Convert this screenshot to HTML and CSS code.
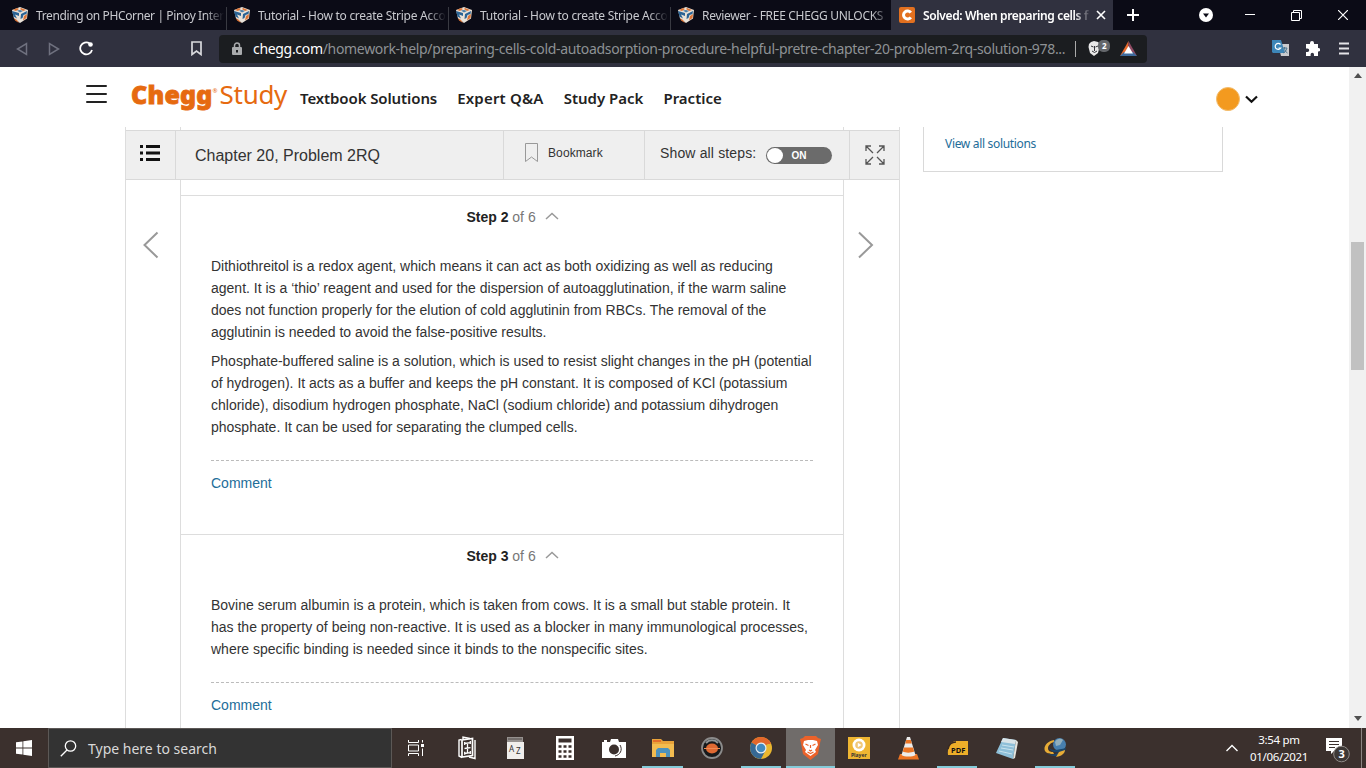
FILE: index.html
```html
<!DOCTYPE html>
<html lang="en">
<head>
    <meta charset="UTF-8">
    <title>Solved: When preparing cells</title>
    <link rel="stylesheet" href="styles.css">
</head>
<body>

<svg width="0" height="0" class="defs">
    <symbol id="cube" viewBox="0 0 16 16">
        <path d="M0 3 8 0l8 3-1 8.500-7 4.500-6-4.500z" fill="#e9e2d8"/>
        <path d="M1 3 5 1l2 1-3 2zM9 1l5 2-3 1-3-2zM12 9l3-2-.5 4-3.500 2.500zM2 11l3 2 2 3-4-2.500z" fill="#dc7436"/>
        <path d="M0 4l7 2v3L3 7.500l2 4-3.500-2zM9 7l6-3-.5 3-3 1-1 3-2 1z" fill="#2a6394"/>
        <path d="M5 3.500 8 3l3 1-3 1.500z" fill="#4b7fa9"/>
    </symbol>
    <symbol id="up" viewBox="0 0 14 8"><path d="M1 7l6-5.500L13 7" fill="none" stroke="#999" stroke-width="1.500"/></symbol>
</svg>

<div class="tabs">
    <div class="tab"><svg class="fav"><use href="#cube"/></svg><span class="t1">Trending on PHCorner | Pinoy Inter</span></div>
    <div class="tab"><svg class="fav"><use href="#cube"/></svg><span class="t2">Tutorial - How to create Stripe Acco</span></div>
    <div class="tab"><svg class="fav"><use href="#cube"/></svg><span class="t2">Tutorial - How to create Stripe Acco</span></div>
    <div class="tab"><svg class="fav"><use href="#cube"/></svg><span class="t3">Reviewer - FREE CHEGG UNLOCKS</span></div>
    <div class="tab active">
        <svg class="fav" viewBox="0 0 16 16"><rect width="16" height="16" rx="2" fill="#e2701f"/><path d="M11.800 5.700A4 4 0 1 0 11.800 10.300" fill="none" stroke="#fff" stroke-width="3"/></svg>
        <span class="t4">Solved: When preparing cells f</span>
        <svg class="close" width="10" height="10" viewBox="0 0 10 10"><path d="M1 1l8 8M9 1L1 9" stroke="#fff" stroke-width="1.600"/></svg>
    </div>
    <svg class="plus" width="12" height="12" viewBox="0 0 12 12"><path d="M6 0v12M0 6h12" stroke="#fff" stroke-width="2"/></svg>
    <div class="winbtns">
        <svg width="14" height="14" viewBox="0 0 14 14"><circle cx="7" cy="7" r="7" fill="#fff"/><path d="M4 5.500h6L7 9.500z" fill="#0b0b16"/></svg>
        <svg width="10" height="10" viewBox="0 0 10 10"><path d="M0 4.500h10" stroke="#fff"/></svg>
        <svg width="11" height="11" viewBox="0 0 11 11"><path d="M.5 2.500h8v8h-8zM2.500 2.500v-2h8v8h-2" fill="none" stroke="#fff"/></svg>
        <svg width="10" height="10" viewBox="0 0 10 10"><path d="M0 0l10 10M10 0L0 10" stroke="#fff" stroke-width="1.200"/></svg>
    </div>
</div>

<div class="toolbar">
    <svg class="back" width="12" height="14" viewBox="0 0 12 14"><path d="M10.500 1.500v11L1.500 7z" fill="none" stroke="#6f717f" stroke-width="1.500"/></svg>
    <svg class="fwd" width="12" height="14" viewBox="0 0 12 14"><path d="M1.500 1.500v11l9-5.500z" fill="none" stroke="#6f717f" stroke-width="1.500"/></svg>
    <svg class="reload" width="15" height="15" viewBox="0 0 15 15"><path d="M10.500 2.300A6 6 0 1 0 13 9" fill="none" stroke="#fff" stroke-width="1.800"/><circle cx="11.500" cy="3.500" r="2.300" fill="#fff"/></svg>
    <svg class="mark" width="11" height="15" viewBox="0 0 11 15"><path d="M1 1h9v12.500l-4.500-3.500L1 13.500z" fill="none" stroke="#d8d9dd" stroke-width="1.700"/></svg>
    <div class="url">
        <svg width="10" height="13" viewBox="0 0 10 13"><rect y="5" width="10" height="8" rx="1" fill="#a9abad"/><path d="M2.500 5V3.500a2.500 2.500 0 0 1 5 0V5" fill="none" stroke="#a9abad" stroke-width="1.500"/><path d="M4 8h2v2.500H4z" fill="#1b1d20"/></svg>
        <span class="addr"><b>chegg.com</b>/homework-help/preparing-cells-cold-autoadsorption-procedure-helpful-pretre-chapter-20-problem-2rq-solution-978...</span>
        <i class="bar"></i>
        <svg class="shield" width="24" height="17" viewBox="0 0 24 17"><path d="M2 4l2-2 3-1 4 1 2 2-.5 3-1.500 6-4 3-4-3-1.500-6z" fill="#e8e8e8"/><path d="M4 6l2.500 1M11 6L8.500 7M7.500 6v5M5 11l2.500 1.500L10 11" stroke="#34353a" fill="none"/><rect x="11" y="0" width="12" height="12" rx="5" fill="#63666a"/><text x="15" y="9">2</text></svg>
        <svg width="17" height="15" viewBox="0 0 17 15"><path d="M8.500 0L0 15l8.500-5z" fill="#e7692b"/><path d="M8.500 0L17 15l-8.500-5z" fill="#8e4a62"/><path d="M0 15h17l-4-4H4z" fill="#3d6a9c"/><path d="M8.500 5L4 12.500h9z" fill="#fff"/></svg>
    </div>
    <div class="ext">
        <svg width="17" height="17" viewBox="0 0 17 17"><path d="M6 4h11v12H9z" fill="#c9cacd"/><path d="M0 0h9l4 13H1L0 12z" fill="#3d86b8"/><path d="M8.500 4.500a3 3 0 1 0 .3 3.500H6.500" fill="none" stroke="#fff" stroke-width="1.200"/><path d="M10 8h5M12.500 7v1c0 2 1 4 3 5M15 8c-1 3-2 4-4 5" fill="none" stroke="#4a7590"/></svg>
        <svg width="15" height="15" viewBox="0 0 15 15"><path d="M1 3h4V2a2 2 0 0 1 4 0v1h4v4h.5a1.700 1.700 0 0 1 0 3.500H13V15H9v-1.500a1.700 1.700 0 0 0-3.400 0V15H1v-4h1.500a1.700 1.700 0 0 0 0-3.400H1z" fill="#fff"/></svg>
        <svg class="menu" width="10" height="13" viewBox="0 0 10 13"><path d="M0 1.500h10M0 6.500h10M0 11.500h10" stroke="#e4e4e8" stroke-width="2"/></svg>
    </div>
</div>

<div class="view">
    <div class="page">
        <div class="head">
            <svg class="burger" width="21" height="20" viewBox="0 0 21 20"><path d="M1 2h19M1 10h19M1 18h19" stroke="#222" stroke-width="2" stroke-linecap="round"/></svg>
            <div class="logo"><b>Chegg</b><sup>®</sup><span>Study</span></div>
            <nav><a class="n1">Textbook Solutions</a><a class="n2">Expert Q&amp;A</a><a>Study Pack</a><a>Practice</a></nav>
            <div class="user">
                <i class="avatar"></i>
                <svg width="13" height="9" viewBox="0 0 13 9"><path d="M1 1.500l5.500 5.300L12 1.500" fill="none" stroke="#111" stroke-width="2.200"/></svg>
            </div>
        </div>
        <div class="cols">
            <div class="solution">
                <div class="strip"></div>
                <div class="chapter">
                    <div class="cell list"><svg width="20" height="16" viewBox="0 0 20 16"><path d="M0 1.500h3M6 1.500h14M0 8h3M6 8h14M0 14.500h3M6 14.500h14" stroke="#111" stroke-width="3"/></svg></div>
                    <div class="cell title"><span>Chapter 20, Problem 2RQ</span></div>
                    <div class="cell bookmark"><svg width="14" height="20" viewBox="0 0 14 20"><path d="M.5.5h12v18L6.500 14l-6 4.500z" fill="none" stroke="#999"/></svg><span>Bookmark</span></div>
                    <div class="cell show"><span>Show all steps:</span><div class="switch"><i></i><b>ON</b></div></div>
                    <div class="cell full"><svg width="20" height="20" viewBox="0 0 20 20"><path d="M1 6V1h5M1 1l7 7M14 1h5v5M19 1l-7 7M1 14v5h5M1 19l7-7M14 19h5v-5M19 19l-7-7" fill="none" stroke="#555" stroke-width="1.300"/></svg></div>
                </div>
                <div class="content">
                    <div class="side"><svg width="16" height="28" viewBox="0 0 16 28"><path d="M14.500 1.500L1.500 14l13 12.500" fill="none" stroke="#999" stroke-width="2"/></svg></div>
                    <div class="steps">
                        <div class="gap"></div>
                        <div class="step">
                            <div class="name"><b>Step 2</b> of 6 <svg width="14" height="8"><use href="#up"/></svg></div>
                            <p>Dithiothreitol is a redox agent, which means it can act as both oxidizing as well as reducing<br>
                            agent. It is a ‘thio’ reagent and used for the dispersion of autoagglutination, if the warm saline<br>
                            does not function properly for the elution of cold agglutinin from RBCs. The removal of the<br>
                            agglutinin is needed to avoid the false-positive results.</p>
                            <p>Phosphate-buffered saline is a solution, which is used to resist slight changes in the pH (potential<br>
                            of hydrogen). It acts as a buffer and keeps the pH constant. It is composed of KCl (potassium<br>
                            chloride), disodium hydrogen phosphate, NaCl (sodium chloride) and potassium dihydrogen<br>
                            phosphate. It can be used for separating the clumped cells.</p>
                            <div class="comment"><a>Comment</a></div>
                        </div>
                        <div class="step">
                            <div class="name"><b>Step 3</b> of 6 <svg width="14" height="8"><use href="#up"/></svg></div>
                            <p>Bovine serum albumin is a protein, which is taken from cows. It is a small but stable protein. It<br>
                            has the property of being non-reactive. It is used as a blocker in many immunological processes,<br>
                            where specific binding is needed since it binds to the nonspecific sites.</p>
                            <div class="comment"><a>Comment</a></div>
                        </div>
                    </div>
                    <div class="side"><svg width="16" height="28" viewBox="0 0 16 28"><path d="M1 1.500L14 14 1 26.500" fill="none" stroke="#999" stroke-width="2"/></svg></div>
                </div>
            </div>
            <div class="related"><a>View all solutions</a></div>
        </div>
    </div>
    <div class="scroll">
        <svg width="8" height="5" viewBox="0 0 8 5"><path d="M0 5h8L4 0z" fill="#505050"/></svg>
        <i class="thumb"></i>
        <svg width="8" height="5" viewBox="0 0 8 5"><path d="M0 0h8L4 5z" fill="#505050"/></svg>
    </div>
</div>

<div class="taskbar">
    <div class="start"><svg width="16" height="16" viewBox="0 0 16 16"><path d="M0 2.300L6.500 1.400v6.100H0zM7.300 1.300L16 0v7.500H7.300zM0 8.400h6.500v6.200L0 13.700zM7.300 8.400H16V16l-8.700-1.300z" fill="#fff"/></svg></div>
    <div class="search">
        <svg width="17" height="17" viewBox="0 0 17 17"><circle cx="10.500" cy="6" r="5.200" fill="none" stroke="#fff" stroke-width="1.300"/><path d="M7 10L.8 16.200" stroke="#fff" stroke-width="1.300"/></svg>
        <span>Type here to search</span>
    </div>
    <div class="apps">
        <div class="app"><svg class="tasks" width="16" height="16" viewBox="0 0 16 16"><path d="M.5 0v2.500h10V0M.5 16v-2.500h10V16M.5 5h10v6H.5zM14.500 0v2.500M14.500 8.500V16" fill="none" stroke="#fff"/><path d="M13 4h3v3h-3z" fill="#fff"/></svg></div>
        <div class="app"><svg width="18" height="24" viewBox="0 0 18 24"><path d="M3.500 3.500L1 4v16l3 1.500M5 3.500V1.200L12 2.500M17 4v18.500l-6-1.500" fill="none" stroke="#fff" stroke-width="1.400"/><path d="M4 4l10.500-1.500v17L4 21z" fill="none" stroke="#fff" stroke-width="1.700"/><path d="M6.500 7.500l6-.8M6.500 12.500l6-.8M6.500 17.500l6-.8M9.500 7v10.500M6.700 6v3M12.300 5v3M6.700 15.800v3M12.300 15v3" fill="none" stroke="#fff" stroke-width="1.300"/></svg></div>
        <div class="app"><svg class="az" width="17" height="22" viewBox="0 0 17 22"><path d="M0 0h16v6H0z" fill="#96918f"/><path d="M0 5h17v17H0z" fill="#f0eeec"/><path d="M1 2h14" stroke="#514b49"/><text x="2" y="15">A</text><text x="9" y="17">Z</text></svg></div>
        <div class="app"><svg width="18" height="24" viewBox="0 0 18 24"><path d="M0 0h18v24H0z" fill="#fff"/><path d="M2.500 2.500h13v4h-13z" fill="#3b302d"/><path d="M2.500 10.500h13M2.500 15.500h13M2.500 20.500h13" stroke="#3b302d" stroke-width="2.500" stroke-dasharray="3 2"/></svg></div>
        <div class="app"><svg width="24" height="19" viewBox="0 0 24 19"><path d="M0 3h2V1h3v2h3l1-3h7l1 3h7v16H0z" fill="#fff"/><circle cx="12" cy="10.500" r="5" fill="#3b302d"/><path d="M18 6c3 5 0 10-5 11" fill="none" stroke="#3b302d"/></svg></div>
        <div class="app open"><svg width="22" height="19" viewBox="0 0 22 19"><path d="M0 0h9l2 2h11v16H0z" fill="#e9a33a"/><path d="M0 5h22v13H0z" fill="#f3bc50"/><path d="M1 1h8v2H1z" fill="#e46e2b"/><path d="M4 18v-7l2-2h10l2 2v7h-4v-4H8v4z" fill="#4d92bd"/></svg></div>
        <div class="app"><svg width="22" height="22" viewBox="0 0 22 22"><circle cx="11" cy="11" r="10" fill="#17191b" stroke="#8b8b8b" stroke-width="1.800"/><path d="M5 6a8 8 0 0 1 12 0" stroke="#8d9395" stroke-width="2" fill="none"/><ellipse cx="11" cy="11.500" rx="6" ry="5" fill="#df6932"/><path d="M3 11.500h16" stroke="#f08a52"/></svg></div>
        <div class="app open"><svg width="22" height="22" viewBox="0 0 22 22"><circle cx="11" cy="11" r="11" fill="#eab72f"/><path d="M11 11L1.500 5.500A11 11 0 0 1 20.500 5.500z" fill="#e3672b"/><path d="M1.500 5.500A11 11 0 0 0 11 22l4.500-8.500L11 11z" fill="#366994"/><path d="M11 6h9.500" stroke="#e3672b" stroke-width="2"/><circle cx="11" cy="11" r="5.500" fill="#e8eef2"/><circle cx="11" cy="11" r="4.300" fill="#438bc0"/></svg></div>
        <div class="app open current"><svg width="21" height="24" viewBox="0 0 21 24"><path d="M5 0h11l2 2 3 1-1 4-2 11-7.500 6L3 18 1 7 0 3l3-1z" fill="#eb622a"/><path d="M4 5l4-1h5l4 1 1 4-3 5 1 2-5.500 4L5 16l1-2-3-5z" fill="#fff"/><path d="M5.500 8l3 1.500M15.500 8l-3 1.500M9 14l1.500 1 1.500-1M10.500 9v3M7.500 16l3 1.500 3-1.500" fill="none" stroke="#eb622a" stroke-width="1.200"/></svg></div>
        <div class="app"><svg class="player" width="22" height="22" viewBox="0 0 22 22"><path d="M0 0h22v22H0z" fill="#efb632"/><circle cx="11" cy="8" r="6.500" fill="#fff"/><circle cx="11" cy="8" r="3.800" fill="#f0c777"/><path d="M9.800 5.800v4.400l3.700-2.200z" fill="#fff"/><text x="3" y="20">Player</text></svg></div>
        <div class="app"><svg width="21" height="23" viewBox="0 0 21 23"><path d="M2 17h17l2 5.500H0z" fill="#ed7423"/><path d="M9 0h3l5.500 18c-3 2-11 2-14 0z" fill="#ececec"/><path d="M8.200 3h4.600l1 3.500H7.200zM6 10.500h9l1.200 4c-3 1.500-9 1.500-11.400 0z" fill="#ec7524"/></svg></div>
        <div class="app open"><svg class="pdf" width="21" height="16" viewBox="0 0 21 16"><path d="M1 15C0 9 3 2 8 1h13v14z" fill="#edae29"/><path d="M1 9C2 4 5 2 9 2" stroke="#392920" stroke-width="1.500" fill="none"/><text x="4" y="12.500">PDF</text></svg></div>
        <div class="app"><svg width="22" height="22" viewBox="0 0 22 22"><path d="M7 1l13 2-3 19L0 16z" fill="#8ebfd8"/><path d="M7 1l13 2-1 4L5 5z" fill="#d9e4e8"/><path d="M20 3l2 2-3 16-2 1z" fill="#e5e5df"/><path d="M6 8l12 2M5 11l12 2M3 14l13 3" stroke="#c9e3ee"/></svg></div>
        <div class="app open"><svg width="23" height="20" viewBox="0 0 23 20"><path d="M10 2C3 3-1 9 1 13c2 3 6 3 9 3l-1-2c-3 0-5-1-5-4 0-2 2-5 6-6z" fill="#e7ac36"/><circle cx="15.500" cy="6.500" r="6.500" fill="#477fae"/><path d="M11 4c2-4 6-4 8-2l-3 5-4 1z" fill="#91afbd"/><path d="M5 10c3 3 9 2 17 0-1 7-10 11-18 6 5 1 9 0 11-2-4 1-8 0-10-4z" fill="#1c4669"/><path d="M12 19c6-1 9-4 9-7l-6 2z" fill="#e7ac36"/></svg></div>
    </div>
    <div class="tray">
        <svg width="12" height="8" viewBox="0 0 12 8"><path d="M.5 7L6 1.500 11.500 7" fill="none" stroke="#fff" stroke-width="1.400"/></svg>
        <div class="clock"><span class="time">3:54 pm</span><span class="date">01/06/2021</span></div>
        <svg class="notes" width="26" height="25" viewBox="0 0 26 25"><path d="M1 0h16v13h-8l-3 3v-3H1z" fill="#fff"/><path d="M4 3.500h10M4 6.500h10M4 9.500h6" stroke="#3b302d"/><circle cx="16.500" cy="16" r="7.800" fill="#3d3836" stroke="#8f8a87"/><text x="13.500" y="20">3</text></svg>
        <i class="desk"></i>
    </div>
</div>

</body>
</html>
```
FILE: styles.css
```css
* {
    box-sizing: border-box;
}
body {
    margin: 0;
    width: 1366px;
    height: 768px;
    overflow: hidden;
    display: flex;
    flex-direction: column;
    font-family: "Liberation Sans", Arial, sans-serif;
    font-size: 14px;
    color: #333;
}
svg {
    display: block;
    flex: none;
}
.defs {
    position: absolute;
}

/* browser tabs */
.tabs {
    height: 30px;
    flex: none;
    display: flex;
    align-items: center;
    background: #0b0b16;
    color: #c8c9ce;
    font: 12px "Noto Sans", sans-serif;
}
.tab {
    width: 222px;
    height: 30px;
    display: flex;
    align-items: center;
    padding-left: 8px;
    position: relative;
}
.tab:first-child {
    width: 226px;
    padding-left: 12px;
}
.tab + .tab::before {
    content: "";
    position: absolute;
    left: 0;
    top: 7px;
    height: 23px;
    border-left: 1px solid #393a42;
}
.tab.active::before {
    display: none;
}
.fav {
    width: 16px;
    height: 16px;
}
.tab span {
    width: 188px;
    margin-left: 8px;
    white-space: nowrap;
    -webkit-mask-image: linear-gradient(90deg, #000 90%, transparent);
    mask-image: linear-gradient(90deg, #000 90%, transparent);
}
.tab .t1 {
    letter-spacing: -0.38px;
}
.tab .t2 {
    letter-spacing: -0.27px;
}
.tab .t3 {
    letter-spacing: -0.3px;
}
.tab .t4 {
    width: 168px;
    letter-spacing: -0.37px;
}
.tab.active {
    background: #30313f;
    color: #fff;
    font-weight: 600;
    margin-left: -1px;
}
.close {
    margin-left: 5px;
}
.plus {
    margin-left: 14px;
}
.winbtns {
    margin-left: auto;
    display: flex;
    align-items: center;
    padding-right: 18px;
}
.winbtns svg + svg {
    margin-left: 32px;
}
.winbtns svg + svg + svg {
    margin-left: 36px;
}

/* address bar */
.toolbar {
    height: 37px;
    flex: none;
    display: flex;
    align-items: center;
    background: #30313f;
    padding-left: 16px;
}
.fwd {
    margin-left: 20px;
}
.reload {
    margin-left: 19px;
}
.mark {
    margin-left: 97px;
}
.url {
    width: 928px;
    height: 28px;
    margin-left: 17px;
    padding-left: 13px;
    display: flex;
    align-items: center;
    background: #1b1d20;
    border-radius: 4px;
    color: #8e9295;
    font: 14px "Noto Sans", sans-serif;
}
.addr {
    width: 814px;
    margin-left: 11px;
    white-space: nowrap;
    letter-spacing: -0.315px;
}
.addr b {
    color: #fff;
    font-weight: 400;
}
.bar {
    width: 1px;
    height: 16px;
    flex: none;
    margin: 0 11px 0 8px;
    background: #aaa;
}
.shield {
    margin-right: 9px;
}
.shield text {
    font: bold 8px "Noto Sans", sans-serif;
    fill: #fff;
}
.ext {
    margin-left: auto;
    padding-right: 17px;
    display: flex;
    align-items: center;
    gap: 16px;
}
.menu {
    margin-left: 3px;
}

/* page */
.view {
    height: 661px;
    flex: none;
    display: flex;
    background: #fff;
}
.page {
    width: 1349px;
    overflow: hidden;
}
.head {
    height: 60px;
    display: flex;
    padding-left: 86px;
}
.burger {
    margin-top: 17px;
}
.logo {
    width: 158px;
    margin: 10px 0 0 24px;
    display: flex;
    color: #e66a10;
    white-space: nowrap;
    font: 26px/34px "Noto Sans", sans-serif;
    letter-spacing: -0.3px;
}
.logo b {
    font: 900 25px/34px "Noto Sans", sans-serif;
    letter-spacing: 0.2px;
    -webkit-text-stroke: 0.8px #e66a10;
}
.logo sup {
    font-size: 6px;
    line-height: 28px;
    width: 7px;
}
nav {
    margin: 20px 0 0 11px;
    display: flex;
    gap: 20px;
    font: 600 15px/22px "Noto Sans", sans-serif;
    color: #222;
    white-space: nowrap;
}
.n1 {
    letter-spacing: -0.1px;
}
.n2 {
    letter-spacing: 0.2px;
}
.user {
    height: 24px;
    margin: 20px 91px 0 auto;
    display: flex;
    align-items: center;
    gap: 5px;
}
.avatar {
    width: 24px;
    height: 24px;
    border-radius: 50%;
    background: #f39a1f;
    border: 1px solid #f3bd6d;
}
.cols {
    display: flex;
    align-items: flex-start;
    padding-left: 125px;
}
.solution {
    width: 775px;
    border: solid #ddd;
    border-width: 0 1px;
}
.strip {
    height: 3px;
    margin: 0 55px 0 54px;
    border: solid #ddd;
    border-width: 0 1px;
}
.chapter {
    height: 50px;
    display: flex;
    background: #efefef;
    border: solid #d9d9d9;
    border-width: 1px 0;
}
.cell {
    display: flex;
    align-items: center;
    border-right: 1px solid #d9d9d9;
    white-space: nowrap;
}
.list {
    width: 50px;
    padding: 0 0 4px 14px;
}
.title {
    width: 328px;
    padding: 2px 0 0 19px;
    font-size: 16px;
}
.bookmark {
    width: 141px;
    padding: 0 0 4px 21px;
    gap: 9px;
    font-size: 12px;
    letter-spacing: 0.1px;
}
.show {
    width: 205px;
    padding-left: 15px;
    gap: 10px;
    letter-spacing: 0.15px;
}
.show span {
    padding-bottom: 4px;
}
.switch {
    width: 66px;
    height: 17px;
    display: flex;
    align-items: center;
    background: #6b6b6b;
    border-radius: 9px;
    color: #fff;
    font-size: 10px;
}
.switch i {
    width: 16px;
    height: 15px;
    margin: 0 8px 0 1px;
    border-radius: 50%;
    background: #fff;
}
.full {
    flex: 1;
    justify-content: center;
    border: 0;
}
.content {
    display: flex;
}
.side {
    width: 54px;
    padding: 51px 0 0 17px;
}
.side:last-child {
    padding-left: 14px;
}
.steps {
    width: 664px;
    height: 548px;
    overflow: hidden;
    border: solid #ddd;
    border-width: 0 1px;
}
.gap {
    height: 15px;
}
.step {
    border-top: 1px solid #ddd;
    padding: 10px 30px 0;
    height: 339px;
}
.name {
    height: 23px;
    margin-bottom: 26px;
    padding-left: 1px;
    line-height: 23px;
    text-align: center;
    color: #777;
}
.name b {
    color: #222;
}
.name svg {
    display: inline-block;
    margin: 0 0 2px 5px;
}
p {
    margin: 0 0 7px;
    line-height: 22px;
    white-space: nowrap;
}
.comment {
    margin-top: 22px;
    padding-top: 14px;
    border-top: 1px dashed #bbb;
    line-height: 16px;
    color: #236d99;
}
.related {
    width: 300px;
    height: 45px;
    margin-left: 23px;
    padding: 8px 0 0 21px;
    border: 1px solid #d9d9d9;
    border-top: 0;
    color: #236d99;
    font: 12px/17px "Noto Sans", sans-serif;
    letter-spacing: -0.32px;
}
.scroll {
    width: 17px;
    display: flex;
    flex-direction: column;
    align-items: center;
    background: #f1f1f1;
    padding: 6px 0 7px;
}
.thumb {
    width: 13px;
    height: 128px;
    margin: 164px 0 auto;
    background: #c1c1c1;
}

/* taskbar */
.taskbar {
    height: 40px;
    flex: none;
    display: flex;
    background: #3b302d;
    color: #fff;
}
.start {
    width: 48px;
    padding: 12px 0 0 16px;
}
.search {
    width: 344px;
    display: flex;
    align-items: center;
    padding-left: 11px;
    background: #333;
    border: 1px solid #5c5856;
    color: #d9d9d9;
    font: 14px "Noto Sans", sans-serif;
}
.search span {
    margin-left: 11px;
}
.apps {
    display: flex;
    padding-left: 1px;
}
.app {
    width: 49.1px;
    height: 40px;
    display: flex;
    align-items: center;
    justify-content: center;
    position: relative;
}
.tasks {
    margin-right: 3px;
}
.open::after {
    content: "";
    position: absolute;
    left: 4px;
    right: 5px;
    bottom: 0;
    height: 2px;
    background: #84cbd9;
}
.current {
    background: #706c6a;
}
.current::after {
    left: 0;
    right: 0;
}
.az text {
    font: 8px "Noto Sans", sans-serif;
    fill: #333;
}
.player text {
    font: bold 5px "Noto Sans", sans-serif;
    fill: #333;
}
.pdf text {
    font: bold 7.5px "Noto Sans", sans-serif;
    fill: #111;
}
.tray {
    margin-left: auto;
    display: flex;
    align-items: center;
}
.clock {
    width: 60px;
    margin: 0 16px 0 11px;
    display: flex;
    flex-direction: column;
    align-items: center;
    font: 11.5px/17px "Noto Sans", sans-serif;
    letter-spacing: -0.3px;
    white-space: nowrap;
}
.notes {
    margin-top: 4px;
}
.notes text {
    font: bold 11px "Noto Sans", sans-serif;
    fill: #fff;
}
.desk {
    width: 1px;
    height: 40px;
    margin: 0 4px 0 10px;
    background: #8b8482;
}
```
